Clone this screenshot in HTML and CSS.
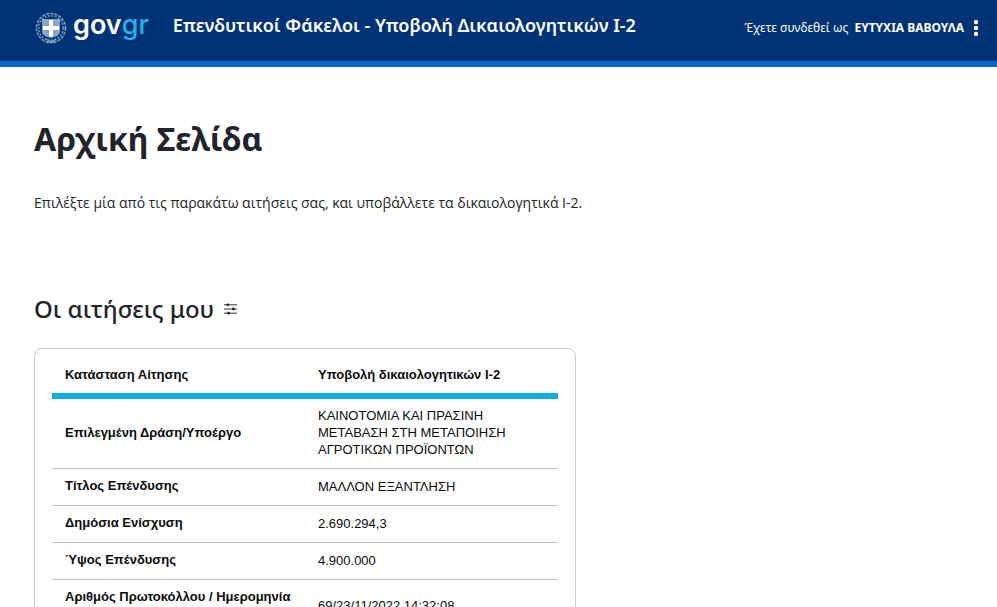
FILE: index.html
```html
<!DOCTYPE html>
<html lang="el">
<head>
<meta charset="utf-8">
<meta name="viewport" content="width=device-width, initial-scale=1">
<title>Επενδυτικοί Φάκελοι</title>
<link rel="stylesheet" href="styles.css">
</head>
<body>
<header class="topbar">
  <a class="logo" href="#">
    <svg class="emblem" viewBox="0 0 34 34" aria-hidden="true">
      <g fill="none" stroke="#a9bbd6">
        <circle cx="17" cy="17" r="14.5" stroke-width="1.500" stroke-dasharray="3 1.2" opacity=".8"/>
        <circle cx="17" cy="17" r="12.3" stroke-width="2" stroke-dasharray="2 1.4" opacity=".6"/>
        <path d="M13 32l4-2 4 2M15 30l-3-2M19 30l3-2" stroke-width="1"/>
      </g>
      <path d="M8 8h18v12c0 4-4 6-9 7c-5-1-9-3-9-7z" fill="#8aa5cc"/>
      <path d="M15 9h4v6h6v4h-6v6l-2 1-2-1v-6H9v-4h6z" fill="#fff"/>
    </svg>
    <span class="wordmark">gov<span class="wordmark-gr">gr</span></span>
  </a>
  <span class="service">Επενδυτικοί Φάκελοι - Υποβολή Δικαιολογητικών Ι-2</span>
  <span class="user">Έχετε συνδεθεί ως <b class="user-name">ΕΥΤΥΧΙΑ ΒΑΒΟΥΛΑ</b></span>
  <button class="menu" type="button" aria-label="Μενού">
    <svg viewBox="0 0 6 18" width="6" height="18" fill="#fff" aria-hidden="true"><circle cx="3" cy="3" r="2.200"/><circle cx="3" cy="9" r="2.200"/><circle cx="3" cy="15" r="2.200"/></svg>
  </button>
</header>
<main class="content">
  <h1 class="title">Αρχική Σελίδα</h1>
  <p class="intro">Επιλέξτε μία από τις παρακάτω αιτήσεις σας, και υποβάλλετε τα δικαιολογητικά Ι-2.</p>
  <h2 class="subtitle">Οι αιτήσεις μου
    <svg class="sliders" viewBox="0 0 14 12" aria-hidden="true">
      <path d="M0 1.500h14M0 6h14M0 10.500h14" stroke="#212529" stroke-width="1"/>
      <g fill="#212529"><circle cx="4" cy="1.500" r="1.500"/><circle cx="10" cy="6" r="1.500"/><circle cx="5" cy="10.500" r="1.500"/></g>
    </svg>
  </h2>
  <section class="card">
    <table class="details">
      <thead>
        <tr><th scope="col">Κατάσταση Αίτησης</th><th scope="col">Υποβολή δικαιολογητικών Ι-2</th></tr>
      </thead>
      <tbody>
        <tr><th scope="row">Επιλεγμένη Δράση/Υποέργο</th><td>ΚΑΙΝΟΤΟΜΙΑ ΚΑΙ ΠΡΑΣΙΝΗ ΜΕΤΑΒΑΣΗ ΣΤΗ ΜΕΤΑΠΟΙΗΣΗ ΑΓΡΟΤΙΚΩΝ ΠΡΟΪΟΝΤΩΝ</td></tr>
        <tr><th scope="row">Τίτλος Επένδυσης</th><td>ΜΑΛΛΟΝ ΕΞΑΝΤΛΗΣΗ</td></tr>
        <tr><th scope="row">Δημόσια Ενίσχυση</th><td>2.690.294,3</td></tr>
        <tr><th scope="row">Ύψος Επένδυσης</th><td>4.900.000</td></tr>
        <tr><th scope="row">Αριθμός Πρωτοκόλλου / Ημερομηνία<br>&nbsp;</th><td>69/23/11/2022 14:32:08</td></tr>
      </tbody>
    </table>
  </section>
</main>
</body>
</html>
```
FILE: styles.css
```css
* { box-sizing: border-box; }
body {
  margin: 0;
  background: #fff;
  color: #212529;
  font-family: "Noto Sans", "Open Sans", sans-serif;
}
.topbar {
  display: flex;
  align-items: center;
  min-height: 67px;
  padding: 0 18px 6px 34px;
  background: #003375;
  border-bottom: 6px solid #0869c0;
  color: #fff;
}
.logo {
  display: flex;
  align-items: center;
  gap: 5px;
  color: #fff;
  text-decoration: none;
}
.emblem { width: 34px; height: 34px; }
.wordmark {
  font: 600 27px/36px Inter, sans-serif;
  padding-bottom: 6px;
}
.wordmark-gr { color: #25b1f0; font-weight: 500; }
.service {
  margin-left: 24px;
  padding-bottom: 6px;
  font-size: 18px;
  line-height: 24px;
  font-weight: 600;
  white-space: nowrap;
}
.user {
  margin-left: auto;
  font-size: 12px;
  line-height: 18px;
  white-space: nowrap;
}
.user-name { margin-left: 3px; font-weight: 700; }
.menu {
  display: flex;
  margin-left: 9px;
  padding: 0;
  border: 0;
  background: none;
}
.content { padding: 48px 34px; }
.title {
  margin: 0;
  font-size: 32px;
  line-height: 48px;
  font-weight: 700;
}
.intro {
  margin: 28px 0 0;
  font-size: 14px;
  line-height: 24px;
  font-family: "Open Sans", "Noto Sans", sans-serif;
}
.subtitle {
  display: flex;
  align-items: center;
  gap: 10px;
  margin: 78px 0 0;
  font-size: 24px;
  line-height: 32px;
  font-weight: 500;
}
.sliders { width: 13px; height: 12px; }
.card {
  max-width: 542px;
  margin-top: 23px;
  padding: 8px 17px 16px;
  border: 1px solid #ccc;
  border-radius: 8px;
}
.details {
  width: 100%;
  table-layout: fixed;
  border-collapse: separate;
  border-spacing: 0;
  color: #0b0c0c;
  font: 13px/17px "Liberation Sans", Arial, sans-serif;
}
.details th,
.details td {
  padding: 8px 13px 10px;
  border-bottom: 1px solid #c4c4c4;
  text-align: left;
  vertical-align: middle;
}
.details th { line-height: 18px; font-weight: 700; }
.details thead th {
  padding: 9px 13px;
  border-bottom: 6px solid #0cade0;
}
.details tbody tr:last-child th { line-height: 17px; }
```
